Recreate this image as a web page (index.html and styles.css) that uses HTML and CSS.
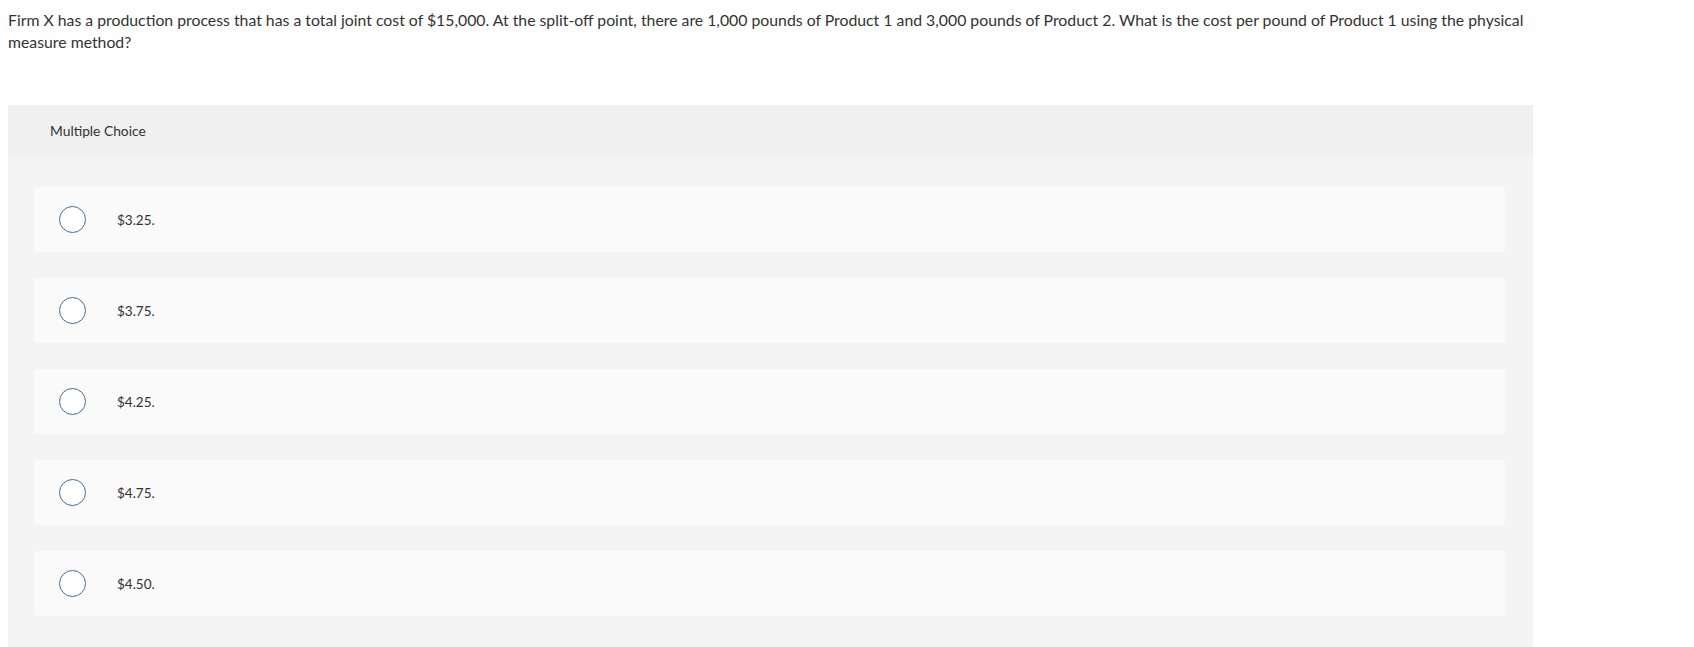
FILE: index.html
```html
<!DOCTYPE html>
<html>
<head>
<meta charset="utf-8">
<link rel="stylesheet" href="styles.css">
</head>
<body>
<p class="question">Firm X has a production process that has a total joint cost of $15,000. At the split-off point, there are 1,000 pounds of Product 1 and 3,000 pounds of Product 2. What is the cost per pound of Product 1 using the physical measure method?</p>
<section class="mc">
  <div class="mc-header">Multiple Choice</div>
  <div class="mc-body">
    <div class="option"><span class="radio"></span><span class="label">$3.25.</span></div>
    <div class="option"><span class="radio"></span><span class="label">$3.75.</span></div>
    <div class="option"><span class="radio"></span><span class="label">$4.25.</span></div>
    <div class="option"><span class="radio"></span><span class="label">$4.75.</span></div>
    <div class="option"><span class="radio"></span><span class="label">$4.50.</span></div>
  </div>
</section>
</body>
</html>
```
FILE: styles.css
```css
html, body {
  margin: 0;
  padding: 0;
  background: #ffffff;
}
body {
  padding: 8px;
  font-family: Lato, "Liberation Sans", sans-serif;
  color: #333333;
}
.question {
  margin: 0;
  width: 1525px;
  font-size: 15.8px;
  line-height: 22px;
  padding-top: 1px;
}
.mc {
  margin-top: 52px;
  width: 1525px;
  background: #f4f4f4;
  border-radius: 2px 2px 0 0;
}
.mc-header {
  height: 50px;
  display: flex;
  align-items: center;
  padding-left: 42px;
  background: #f0f0f0;
  font-size: 13.8px;
  color: #333;
}
.mc-body {
  display: flex;
  flex-direction: column;
  gap: 26px;
  padding: 32px 28px 40px 26px;
}
.option {
  height: 65px;
  background: #fafafa;
  border-radius: 3px;
  display: flex;
  align-items: center;
  padding-left: 25px;
}
.radio {
  width: 25px;
  height: 25px;
  border: 1.5px solid #456d93;
  border-radius: 50%;
  background: #fff;
  flex: none;
}
.label {
  margin-left: 31px;
  font-size: 13.5px;
  color: #333;
}
```
